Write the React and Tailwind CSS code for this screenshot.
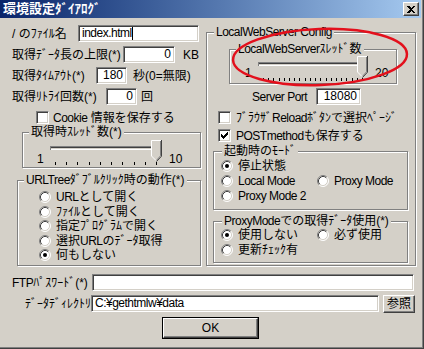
import React from 'react';

// classic win2k control pieces
const Sunken = 'bg-white border border-t-[#808080] border-l-[#808080] border-r-white border-b-white shadow-[inset_1px_1px_0_#404040,inset_-1px_-1px_0_#d4d0c8]';
const Raised = 'bg-[#d4d0c8] border border-t-white border-l-white border-r-[#404040] border-b-[#404040] shadow-[inset_-1px_-1px_0_#808080]';
const Etched = 'relative border border-[#808080] shadow-[inset_1px_1px_0_#fff,1px_1px_0_#fff]';

// latin runs are a bit narrower in the original UI font
const L = ({ children }) => <span className="tracking-[-0.5px]">{children}</span>;

const Input = ({ className = '', value = '', right, caret }) => (
  <div className={`h-[17px] shrink-0 flex items-center px-[3px] ${right ? 'justify-end' : ''} ${Sunken} ${className}`}>
    <span className="leading-[13px] whitespace-nowrap">{value}</span>
    {caret && <span className="w-px h-[13px] bg-black" />}
  </div>
);

const CHECK = [[6, 0, 1], [5, 1, 2], [0, 2, 1], [4, 2, 3], [0, 3, 2], [3, 3, 3], [0, 4, 5], [1, 5, 3], [2, 6, 1]];

const Check = ({ checked }) => (
  <div className={`w-[13px] h-[13px] shrink-0 flex items-center justify-center ${Sunken}`}>
    {checked && (
      <svg width="7" height="7" viewBox="0 0 7 7" shapeRendering="crispEdges">
        {CHECK.map(([x, y, w], i) => <rect key={i} x={x} y={y} width={w} height="1" fill="#000" />)}
      </svg>
    )}
  </div>
);

const Radio = ({ checked }) => (
  <svg width="12" height="12" viewBox="0 0 12 12" className="shrink-0">
    <circle cx="6" cy="6" r="5" fill="#fff" />
    <path d="M2.11 9.89 A5.5 5.5 0 0 1 9.89 2.11" stroke="#808080" fill="none" />
    <path d="M9.89 2.11 A5.5 5.5 0 0 1 2.11 9.89" stroke="#fff" fill="none" />
    <path d="M2.82 9.18 A4.5 4.5 0 0 1 9.18 2.82" stroke="#404040" fill="none" />
    <path d="M9.18 2.82 A4.5 4.5 0 0 1 2.82 9.18" stroke="#d4d0c8" fill="none" />
    {checked && <circle cx="6" cy="6" r="2" fill="#000" />}
  </svg>
);

const RadioRow = ({ checked, children, className = '' }) => (
  <div className={`h-[15px] flex items-center ${className}`}>
    <Radio checked={checked} />
    <span className="ml-[5px] leading-[12px] whitespace-nowrap">{children}</span>
  </div>
);

const Slider = ({ w, ticks }) => {
  const tr = w - 4;
  const xs = Array.from({ length: ticks }, (_, i) => Math.round(11 + ((tr - 5.5 - 11.5) * i) / (ticks - 1)));
  const t = tr - 11;
  return (
    <svg width={w} height="28" viewBox={`0 0 ${w} 28`} className="shrink-0">
      <g shapeRendering="crispEdges">
        <rect x="6" y="8" width={tr - 6} height="1" fill="#808080" />
        <rect x="7" y="9" width={tr - 8} height="1" fill="#404040" />
        <rect x="6" y="11" width={tr - 6} height="1" fill="#fff" />
        <rect x="6" y="8" width="1" height="4" fill="#808080" />
        <rect x={tr - 1} y="8" width="1" height="4" fill="#fff" />
        {xs.map((x, i) => <rect key={i} x={x} y="24" width="1" height="3" fill="#000" />)}
      </g>
      <path d={`M${t} 2 H${tr} V18 L${t + 5.5} 23.5 L${t} 18 Z`} fill="#d4d0c8" />
      <path d={`M${t + 0.5} 18 V2.5 H${tr - 1}`} stroke="#fff" fill="none" />
      <path d={`M${t + 0.5} 18 L${t + 5} 22.5`} stroke="#fff" fill="none" />
      <path d={`M${tr - 0.5} 2 V18.2 L${t + 5.5} 23.5`} stroke="#404040" fill="none" />
      <path d={`M${tr - 1.5} 3 V17.8 L${t + 5.5} 22.3`} stroke="#808080" fill="none" />
    </svg>
  );
};

const Legend = ({ children, className = 'left-[6px]' }) => (
  <span className={`absolute -top-[7px] px-[2px] leading-[12px] bg-[#d4d0c8] whitespace-nowrap ${className}`}>{children}</span>
);

export default function App() {
  return (
    <div className="relative w-[424px] h-[349px] bg-[#d4d0c8] overflow-hidden text-[12px] leading-[14px] text-black font-['Liberation_Sans','Noto_Sans_CJK_JP',sans-serif] shadow-[inset_-1px_-1px_0_#404040,inset_-2px_-2px_0_#808080]">
      {/* title bar */}
      <div className="h-[18px] w-[421px] bg-linear-to-r from-[#0a246a] to-[#a6caf0] flex items-center justify-between pl-[3px] pr-[2px]">
        <span className="text-white font-bold text-[13px]">環境設定ﾀﾞｲｱﾛｸﾞ</span>
        <div className={`w-[16px] h-[14px] flex items-center justify-center ${Raised}`}>
          <svg width="8" height="7" viewBox="0 0 8 7" shapeRendering="crispEdges">
            <path d="M0 0h2l2 2 2-2h2L5 3.5 8 7H6L4 5 2 7H0l3-3.5z" fill="#000" />
          </svg>
        </div>
      </div>

      <div className="flex">
        {/* left column */}
        <div className="w-[206px] flex flex-col">
          <div className="mt-[7px] h-[17px] flex items-center pl-[12px]">
            <span className="w-[66px] shrink-0 whitespace-nowrap">/ のﾌｧｲﾙ名</span>
            <Input className="w-[121px]" value={<L>index.html</L>} caret />
          </div>
          <div className="mt-[4px] h-[17px] flex items-center pl-[12px]">
            <span className="w-[111px] shrink-0 whitespace-nowrap">取得ﾃﾞｰﾀ長の上限(*)</span>
            <Input className="w-[52px]" value="0" right />
            <span className="ml-[8px]">KB</span>
          </div>
          <div className="mt-[4px] h-[17px] flex items-center pl-[12px]">
            <span className="w-[84px] shrink-0 whitespace-nowrap">取得ﾀｲﾑｱｳﾄ(*)</span>
            <Input className="w-[31px]" value="180" right />
            <span className="ml-[6px] whitespace-nowrap">秒(0=無限)</span>
          </div>
          <div className="mt-[4px] h-[17px] flex items-center pl-[12px]">
            <span className="w-[94px] shrink-0 whitespace-nowrap">取得ﾘﾄﾗｲ回数(*)</span>
            <Input className="w-[31px]" value="0" right />
            <span className="ml-[4px]">回</span>
          </div>
          <div className="mt-[6px] h-[13px] flex items-center pl-[36px]">
            <Check />
            <span className="ml-[4px] whitespace-nowrap"><L>Cookie</L> 情報を保存する</span>
          </div>

          <div className={`mt-[8px] ml-[22px] w-[179px] h-[36px] ${Etched}`}>
            <Legend>取得時ｽﾚｯﾄﾞ数(*)</Legend>
            <div className="flex items-start pt-[5px] pl-[14px]">
              <span className="mt-[14px] w-[7px]">1</span>
              <Slider w={122} ticks={10} />
              <span className="mt-[14px] ml-[3px]">10</span>
            </div>
          </div>

          <div className={`mt-[12px] ml-[17px] w-[184px] h-[86px] ${Etched}`}>
            <Legend><L>URLTree</L>ﾀﾞﾌﾞﾙｸﾘｯｸ時の動作(*)</Legend>
            <div className="flex flex-col pt-[9px] pl-[21px] [&>div]:h-[14.5px]">
              <RadioRow><L>URL</L>として開く</RadioRow>
              <RadioRow>ﾌｧｲﾙとして開く</RadioRow>
              <RadioRow>指定ﾌﾟﾛｸﾞﾗﾑで開く</RadioRow>
              <RadioRow>選択<L>URL</L>のﾃﾞｰﾀ取得</RadioRow>
              <RadioRow checked>何もしない</RadioRow>
            </div>
          </div>
        </div>

        {/* right column */}
        <div className={`mt-[14px] w-[210px] h-[234px] flex flex-col ${Etched}`}>
          <Legend className="left-[7px]"><L>LocalWebServer Config</L></Legend>

          <div className={`mt-[16px] ml-[22px] w-[168px] h-[35px] ${Etched}`}>
            <Legend><L>LocalWebServer</L>ｽﾚｯﾄﾞ数</Legend>
            <div className="flex items-start pt-[4px] pl-[15px]">
              <span className="mt-[12px] w-[7px]">1</span>
              <Slider w={120} ticks={20} />
              <span className="mt-[12px] ml-[3px]">20</span>
            </div>
          </div>

          <div className="mt-[4px] h-[17px] flex items-center pl-[45px]">
            <span className="w-[64px] shrink-0 whitespace-nowrap"><L>Server Port</L></span>
            <Input className="w-[45px]" value="18080" right />
          </div>

          <div className="mt-[6px] h-[13px] flex items-center pl-[11px]">
            <Check />
            <span className="ml-[5px] whitespace-nowrap">ﾌﾞﾗｳｻﾞ<L>Reload</L>ﾎﾞﾀﾝで選択ﾍﾟｰｼﾞ</span>
          </div>
          <div className="mt-[5px] h-[13px] flex items-center pl-[11px]">
            <Check checked />
            <span className="ml-[5px] whitespace-nowrap"><L>POSTmethod</L>も保存する</span>
          </div>

          <div className={`mt-[9px] ml-[6px] w-[195px] h-[59px] ${Etched}`}>
            <Legend className="left-[8px]">起動時のﾓｰﾄﾞ</Legend>
            <div className="flex flex-col pt-[6px] pl-[7px]">
              <RadioRow checked>停止状態</RadioRow>
              <div className="flex">
                <RadioRow className="w-[96px]"><L>Local Mode</L></RadioRow>
                <RadioRow><L>Proxy Mode</L></RadioRow>
              </div>
              <RadioRow><L>Proxy Mode 2</L></RadioRow>
            </div>
          </div>

          <div className={`mt-[11px] ml-[6px] w-[195px] h-[42px] ${Etched}`}>
            <Legend className="left-[8px]"><L>ProxyMode</L>での取得ﾃﾞｰﾀ使用(*)</Legend>
            <div className="flex flex-col pt-[5px] pl-[7px]">
              <div className="flex">
                <RadioRow checked className="w-[96px]">使用しない</RadioRow>
                <RadioRow>必ず使用</RadioRow>
              </div>
              <RadioRow>更新ﾁｪｯｸ有</RadioRow>
            </div>
          </div>
        </div>
      </div>

      {/* bottom rows */}
      <div className="mt-[8px] h-[17px] flex items-center">
        <span className="w-[92px] shrink-0 pl-[12px] whitespace-nowrap"><L>FTP</L>ﾊﾟｽﾜｰﾄﾞ(*)</span>
        <Input className="w-[322px]" />
      </div>
      <div className="mt-[4px] h-[18px] flex items-start">
        <span className="w-[91px] h-[17px] shrink-0 pl-[25px] flex items-center whitespace-nowrap">ﾃﾞｰﾀﾃﾞｨﾚｸﾄﾘ</span>
        <Input className="w-[288px]" value={<L>C:¥gethtmlw¥data</L>} />
        <div className={`ml-[4px] w-[32px] h-[18px] flex items-center justify-center ${Raised}`}>参照</div>
      </div>
      <div className="mt-[4px] ml-[162px] w-[97px] h-[22px] border border-black">
        <div className={`w-full h-full flex items-center justify-center ${Raised}`}>OK</div>
      </div>

      {/* red annotation */}
      <svg className="absolute inset-0 pointer-events-none" width="424" height="349">
        <ellipse cx="320" cy="57" rx="87" ry="28" transform="rotate(-2 320 57)" fill="none" stroke="#e3101c" strokeWidth="2.5" />
      </svg>
    </div>
  );
}
